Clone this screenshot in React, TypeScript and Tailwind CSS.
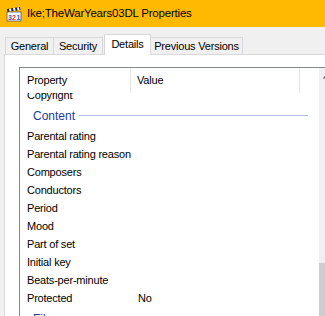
import type { ReactNode } from "react";

const ROWS: Array<[string, string?]> = [
    ["Parental rating"],
    ["Parental rating reason"],
    ["Composers"],
    ["Conductors"],
    ["Period"],
    ["Mood"],
    ["Part of set"],
    ["Initial key"],
    ["Beats-per-minute"],
    ["Protected", "No"],
];

function PlayerIcon() {
    // Media Player Classic style clapperboard
    return (
        <svg width="16" height="16" viewBox="0 0 16 16" className="shrink-0">
            <path d="M1 3 L14 1 L14.6 4 L1.6 6 Z" fill="#222" />
            <path d="M3 2.7 L5 2.4 L5.6 5.4 L3.6 5.7 Z M7 2.1 L9 1.8 L9.6 4.8 L7.6 5.1 Z M11 1.5 L13 1.2 L13.6 4.2 L11.6 4.5 Z" fill="#f5f5f5" />
            <rect x="1" y="6" width="14" height="9" fill="#fff" stroke="#555" strokeWidth="0.8" />
            <text x="2" y="13.5" fontSize="7" fontFamily="Liberation Sans, sans-serif" fontWeight="bold" fill="#2c55c8">3</text>
            <text x="6" y="13.5" fontSize="7" fontFamily="Liberation Sans, sans-serif" fontWeight="bold" fill="#d43a2a">2</text>
            <text x="10.5" y="13.5" fontSize="7" fontFamily="Liberation Sans, sans-serif" fontWeight="bold" fill="#2c55c8">1</text>
        </svg>
    );
}

function Tab({ children, className }: { children: ReactNode; className: string }) {
    return (
        <div className={`flex items-center justify-center whitespace-nowrap border-[#d9d9d9] ${className}`}>
            {children}
        </div>
    );
}

function Row({ name, value }: { name: string; value?: string }) {
    return (
        <div className="flex h-[18px] items-center whitespace-nowrap">
            <span className="w-[111px] shrink-0 pl-[7px]">{name}</span>
            <span className="pl-[7px]">{value}</span>
        </div>
    );
}

function GroupHeader({ label }: { label: string }) {
    return (
        <div className="flex h-[23px] items-center pl-[13px] pr-[11px]">
            <span className="text-[12px] tracking-[0px] text-[#1e3c9a]">{label}</span>
            <span className="ml-[4px] h-px flex-1 bg-[#b3bce6]" />
        </div>
    );
}

export default function App() {
    return (
        <div className="relative flex h-[316px] w-[325px] flex-col overflow-hidden bg-[#f0f0f0] font-['Liberation_Sans',sans-serif] text-[11px] tracking-[-0.2px] text-black">
            {/* Title bar */}
            <div className="flex h-[27px] shrink-0 items-center gap-[5px] bg-[#ffb900] pl-[6px] text-[11.5px]">
                <PlayerIcon />
                <span>Ike;TheWarYears03DL Properties</span>
            </div>

            {/* Tabs */}
            <div className="flex h-[27px] shrink-0 items-end pl-[5px]">
                <Tab className="h-[17px] w-[49px] border border-b-0 bg-[#f0f0f0]">General</Tab>
                <Tab className="h-[17px] w-[49px] border border-b-0 border-l-0 bg-[#f0f0f0]">Security</Tab>
                <Tab className="relative z-10 ml-[1px] -mb-px h-[21px] w-[47px] border border-b-0 bg-white pb-[2px]">Details</Tab>
                <Tab className="h-[17px] w-[92px] border border-b-0 border-l-0 bg-[#f0f0f0]">Previous Versions</Tab>
            </div>

            {/* Panel */}
            <div className="ml-[4px] flex min-h-0 flex-1 flex-col overflow-hidden border-l border-t border-[#d9d9d9] bg-white pl-[14px] pt-[12px]">
                <div className="flex min-h-0 w-[340px] flex-1 border-l border-t border-[#828790]">
                    <div className="flex w-[299px] shrink-0 flex-col">
                        {/* Column header */}
                        <div className="relative z-10 flex h-[25px] shrink-0 bg-white">
                            <div className="flex w-[111px] items-center border-r border-[#e5e5e5] pl-[7px]">Property</div>
                            <div className="flex w-[169px] items-center border-r border-[#e5e5e5] pl-[6px]">Value</div>
                        </div>
                        <div className="min-h-0 flex-1 overflow-hidden">
                            <div className="-mt-[7px]">
                                <Row name="Copyright" />
                                <GroupHeader label="Content" />
                                {ROWS.map(([name, value]) => (
                                    <Row key={name} name={name} value={value} />
                                ))}
                                <GroupHeader label="Files" />
                            </div>
                        </div>
                    </div>
                    {/* Scrollbar */}
                    <div className="flex w-[17px] shrink-0 flex-col bg-[#f0f0f0]">
                        <div className="flex h-[17px] items-center justify-center">
                            <svg width="9" height="5" viewBox="0 0 9 5">
                                <path d="M0.5 4.5 L4.5 0.5 L8.5 4.5" fill="none" stroke="#606060" strokeWidth="1.3" />
                            </svg>
                        </div>
                        <div className="flex-1" />
                        <div className="h-[53px] shrink-0 bg-[#cdcdcd]" />
                    </div>
                </div>
            </div>
        </div>
    );
}
